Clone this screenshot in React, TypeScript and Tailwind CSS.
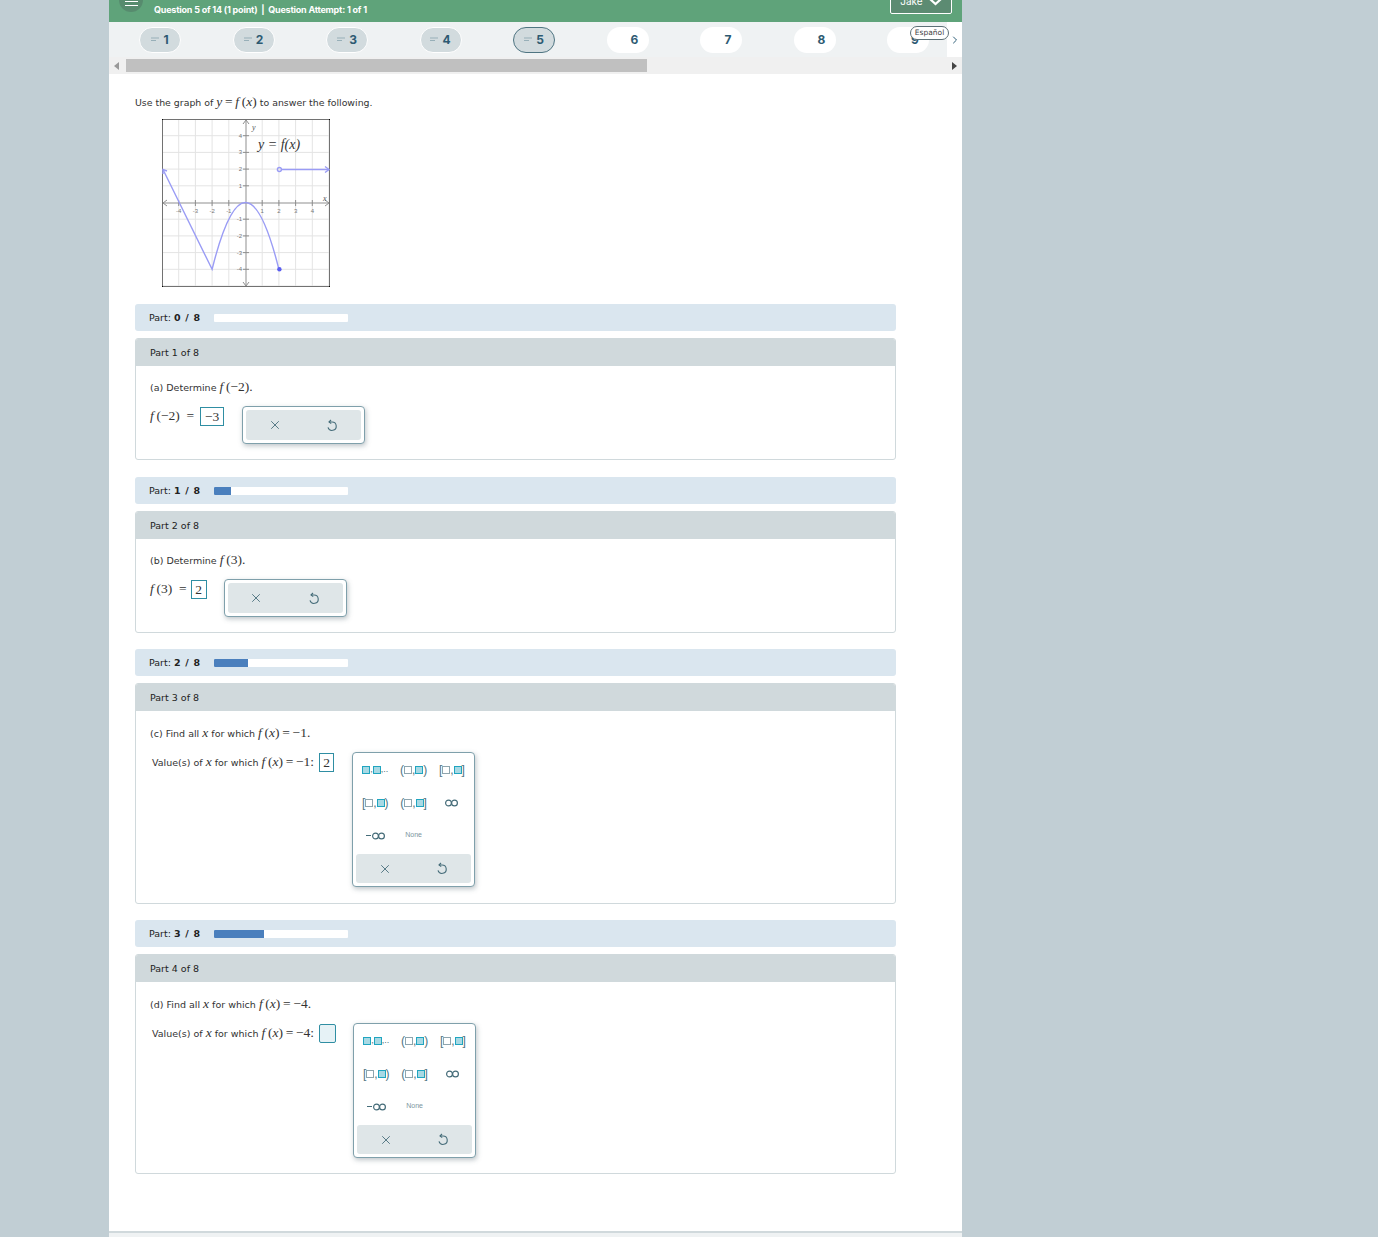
import type { ReactNode } from 'react'
import { ChevronRight, X } from 'lucide-react'

const sans = 'font-["DejaVu_Sans",sans-serif]'

function M({ children }: { children: ReactNode }) {
  return <span className='font-["Liberation_Serif",serif] text-[13.5px] text-[#333]'>{children}</span>
}

function I({ children }: { children: ReactNode }) {
  return <i className='font-["Liberation_Serif",serif]'>{children}</i>
}

function UndoIcon() {
  return (
    <svg width="12" height="13" viewBox="0 0 12 13" fill="none" stroke="#456c79" strokeWidth="1.1">
      <path d="M5 1 L3 3 L5.2 4.6" />
      <path d="M3 3 H6 A4.2 4.2 0 1 1 2 8.4" />
    </svg>
  )
}

function ActionBar({ className }: { className: string }) {
  return (
    <div className={`flex items-center rounded-[3px] bg-[#dfe6e8] ${className}`}>
      <div className="flex flex-1 justify-center">
        <X size={14} strokeWidth={1.5} color="#456c79" />
      </div>
      <div className="flex flex-1 justify-center">
        <UndoIcon />
      </div>
    </div>
  )
}

function SmallPopup({ ml }: { ml: string }) {
  return (
    <div className={`rounded-[4px] border border-[#7fa0ab] bg-white p-[3px] shadow-[1px_2px_5px_rgba(70,90,100,0.35)] ${ml}`}>
      <ActionBar className="h-[30px] w-[115px]" />
    </div>
  )
}

function Empty() {
  return <span className="inline-block h-[8px] w-[8px] border border-[#8ea5ae] bg-white" />
}

function Filled() {
  return <span className="inline-block h-[8px] w-[8px] border border-[#20a5c0] bg-[#a8d9e4]" />
}

function Interval({ open, close }: { open: string; close: string }) {
  return (
    <span className='flex items-center font-["Liberation_Sans",sans-serif] text-[12px] leading-none text-[#4f7582]'>
      {open}
      <Empty />,
      <Filled />
      {close}
    </span>
  )
}

function InfinityIcon() {
  return (
    <svg width="13" height="8" viewBox="0 0 13 8" fill="none" stroke="#456c79" strokeWidth="1.2">
      <circle cx="3.5" cy="4" r="2.9" />
      <circle cx="9.5" cy="4" r="2.9" />
    </svg>
  )
}

function BigPopup() {
  const cell = 'flex h-[33px] items-center justify-center'
  return (
    <div className="w-[123px] rounded-[4px] border border-[#7fa0ab] bg-white px-[3px] pb-[3px] shadow-[1px_2px_5px_rgba(70,90,100,0.35)]">
      <div className="grid grid-cols-3">
        <div className={cell}>
          <span className='flex items-center font-["Liberation_Sans",sans-serif] text-[9px] leading-none text-[#4f7582]'>
            <Filled />,
            <Filled />,..
          </span>
        </div>
        <div className={cell}><Interval open="(" close=")" /></div>
        <div className={cell}><Interval open="[" close="]" /></div>
        <div className={cell}><Interval open="[" close=")" /></div>
        <div className={cell}><Interval open="(" close="]" /></div>
        <div className={cell}><InfinityIcon /></div>
        <div className={`${cell} gap-[1px]`}>
          <span className="h-[1.5px] w-[5px] bg-[#456c79]" />
          <InfinityIcon />
        </div>
        <div className={cell}>
          <span className='font-["Liberation_Sans",sans-serif] text-[7px] text-[#7c959e]'>None</span>
        </div>
      </div>
      <ActionBar className="mt-[2px] h-[29px] w-[115px]" />
    </div>
  )
}

function Answer({ children, className }: { children?: ReactNode; className: string }) {
  return (
    <div className={`flex items-center justify-center border border-[#2f8ea3] font-["Liberation_Serif",serif] text-[13.5px] leading-none text-[#333] ${className}`}>
      {children}
    </div>
  )
}

function PartBar({ done, fill }: { done: number; fill: string }) {
  return (
    <div className="flex h-[27px] items-center rounded-[3px] bg-[#dae6ef] pl-[14px]">
      <span className={`${sans} w-[65px] pt-[1px] text-[9.5px] text-[#222]`}>
        Part: <b className="tracking-[0.7px]">{done} / 8</b>
      </span>
      <div className="h-[8px] w-[134px] overflow-hidden rounded-[1px] bg-white">
        <div className={`h-full bg-[#4a7fbd] ${fill}`} />
      </div>
    </div>
  )
}

function PartCard({ n, height, children }: { n: number; height: string; children: ReactNode }) {
  return (
    <div className={`mt-[7px] overflow-hidden rounded-[3px] border border-[#d0d9dc] bg-white ${height}`}>
      <div className={`${sans} flex h-[27px] items-center bg-[#d0d9dc] pl-[14px] pt-[1px] text-[9.5px] text-[#222]`}>
        Part {n} of 8
      </div>
      <div className={`${sans} pl-[14px] text-[9.5px] text-[#333]`}>{children}</div>
    </div>
  )
}

function Graph() {
  const u = 16.7
  const p = (n: number) => 83.5 + n * u
  const ticks = [-5, -4, -3, -2, -1, 1, 2, 3, 4, 5]
  const labels = [-4, -3, -2, -1, 1, 2, 3, 4]
  return (
    <svg width="168" height="168" viewBox="0 0 168 168" className="ml-[27px] mt-[9px] block">
      <rect x="0.5" y="0.5" width="167" height="167" fill="#fff" stroke="#000" />
      {ticks.map((t) => (
        <g key={t} stroke="#e4e4e4">
          <line x1={p(t)} x2={p(t)} y1="1" y2="167" />
          <line y1={p(t)} y2={p(t)} x1="1" x2="167" />
        </g>
      ))}
      <g stroke="#8f8f8f" fill="none">
        <line x1="1" x2="167" y1="84" y2="84" />
        <line x1="84" x2="84" y1="1" y2="167" />
        <path d="M5 81 L1 84 L5 87 M163 81 L167 84 L163 87 M81 5 L84 1 L87 5 M81 163 L84 167 L87 163" />
        {labels.map((t) => (
          <g key={t}>
            <line x1={p(t)} x2={p(t)} y1="81" y2="87" />
            <line y1={p(t)} y2={p(t)} x1="81" x2="87" />
          </g>
        ))}
      </g>
      <g fontFamily="Liberation Sans, sans-serif" fontSize="6" fill="#777">
        {labels.map((t) => (
          <g key={t}>
            <text x={p(t)} y="94" textAnchor="middle">{t}</text>
            <text x="80" y={p(-t) + 2} textAnchor="end">{t}</text>
          </g>
        ))}
      </g>
      <g fontFamily="Liberation Serif, serif" fontStyle="italic" fill="#555">
        <text x="90" y="11" fontSize="8">y</text>
        <text x="161" y="82" fontSize="8">x</text>
        <text x="96" y="30" fontSize="14" fill="#333">y = f(x)</text>
      </g>
      <g stroke="#9a9cf5" fill="none" strokeWidth="1.4">
        <path d={`M1 50.5 L${p(-2)} ${p(4)} Q${p(-1)} 83.5 83.5 83.5 Q${p(1)} 83.5 ${p(2)} ${p(4)}`} />
        <line x1="119" x2="167" y1="50.5" y2="50.5" />
        <path d="M163 47.5 L167 50.5 L163 53.5 M1 55 L1 50.5 L5 52" />
        <circle cx="117.4" cy="50.5" r="2" />
      </g>
      <circle cx="117.4" cy="150.3" r="2.2" fill="#5b5ef0" />
    </svg>
  )
}

const tabs = [1, 2, 3, 4, 5, 6, 7, 8, 9]

function TabPill({ n }: { n: number }) {
  const answered = n <= 5
  const current = n === 5
  return (
    <div className="flex w-[93.5px] justify-center">
      <div
        className={`flex h-[26px] w-[42px] items-center justify-center gap-[4px] rounded-full font-["Inter",sans-serif] text-[12px] font-bold text-[#2d5a72] ${
          current
            ? 'border border-[#4f7582] bg-[#d2dbde]'
            : answered
              ? 'border border-white bg-[#d2dbde]'
              : 'bg-white pl-[14px]'
        }`}
      >
        {answered && (
          <svg width="8" height="5" viewBox="0 0 8 5" stroke="#97afb8" strokeWidth="1">
            <line x1="0" x2="8" y1="1" y2="1" />
            <line x1="0" x2="5" y1="3.5" y2="3.5" />
          </svg>
        )}
        {n}
      </div>
    </div>
  )
}

export default function App() {
  return (
    <div className="h-[1237px] overflow-hidden bg-[#c1ced4] pl-[109px]">
      <div className="h-full w-[853px] bg-white">
        {/* Header */}
        <div className="relative flex h-[22px] justify-between overflow-hidden bg-[#5fa37a] pl-[45px] pr-[10px]">
          <div className="absolute left-[10px] top-[-12px] flex h-[24px] w-[24px] flex-col items-center justify-end gap-[3px] rounded-full bg-[#578b6e] pb-[6px]">
            <div className="h-px w-[13px] bg-white" />
            <div className="h-px w-[13px] bg-white" />
          </div>
          <span className='mt-[3px] font-["Inter",sans-serif] text-[9px] font-bold tracking-[-0.2px] text-white'>
            Question 5 of 14 (1 point) &nbsp;|&nbsp; Question Attempt: 1 of 1
          </span>
          <div className='-mt-[10px] flex h-[24px] w-[62px] items-end justify-center gap-[6px] rounded-[2px] border border-white bg-[#5c8b72] pb-[4px] font-["Inter",sans-serif] text-[10px] text-white'>
            Jake
            <svg width="13" height="8" viewBox="0 0 13 8" fill="none" stroke="#fff" strokeWidth="2.2" className="mb-[3px]">
              <path d="M1 1 L6.5 6 L12 1" />
            </svg>
          </div>
        </div>

        {/* Question tabs */}
        <div className="relative flex h-[35px] items-center bg-[#eff2f3] pl-[4.25px]">
          {tabs.map((n) => (
            <TabPill key={n} n={n} />
          ))}
          <div className="absolute right-0 top-0 flex h-full w-[15px] items-center justify-center bg-white">
            <ChevronRight size={12} strokeWidth={2} color="#2f5f78" />
          </div>
          <div className={`${sans} absolute left-[801px] top-[4px] flex h-[14px] w-[39px] items-center justify-center rounded-full border border-[#5c6f76] bg-white text-[7.5px] text-[#444]`}>
            Español
          </div>
        </div>
        <div className="flex h-[17px] items-center bg-[#f0f0f0]">
          <div className="ml-[5px] h-0 w-0 border-y-[4px] border-r-[5px] border-y-transparent border-r-[#999]" />
          <div className="ml-[7px] h-[13px] w-[521px] bg-[#c0c0c0]" />
          <div className="ml-[305px] h-0 w-0 border-y-[4px] border-l-[5px] border-y-transparent border-l-[#444]" />
        </div>

        {/* Question body */}
        <div className="pl-[26px] pr-[66px]">
          <p className={`${sans} mt-[19px] h-[17px] text-[9.4px] leading-[18px] text-[#333]`}>
            Use the graph of <M><I>y</I>{'\u2009'}={'\u2009'}<I>f</I>{'\u2009'}(<I>x</I>)</M> to answer the following.
          </p>
          <Graph />

          <div className="mt-[17px]"><PartBar done={0} fill="w-0" /></div>
          <PartCard n={1} height="h-[122px]">
            <p className="mt-[12px] h-[18px] leading-[18px]">(a) Determine <M><I>f</I>{'\u2009'}(−2).</M></p>
            <div className="mt-[10px] flex items-start">
              <M><I>f</I>{'\u2009'}(−2) &nbsp;=</M>
              <Answer className="ml-[6px] mt-[1px] h-[19px] w-[24px]">−3</Answer>
              <SmallPopup ml="ml-[18px]" />
            </div>
          </PartCard>

          <div className="mt-[17px]"><PartBar done={1} fill="w-[17px]" /></div>
          <PartCard n={2} height="h-[122px]">
            <p className="mt-[12px] h-[18px] leading-[18px]">(b) Determine <M><I>f</I>{'\u2009'}(3).</M></p>
            <div className="mt-[10px] flex items-start">
              <M><I>f</I>{'\u2009'}(3) &nbsp;=</M>
              <Answer className="ml-[4px] mt-[1px] h-[19px] w-[16px]">2</Answer>
              <SmallPopup ml="ml-[17px]" />
            </div>
          </PartCard>

          <div className="mt-[16px]"><PartBar done={2} fill="w-[34px]" /></div>
          <PartCard n={3} height="h-[221px]">
            <p className="mt-[13px] h-[18px] leading-[18px]">(c) Find all <M><I>x</I></M> for which <M><I>f</I>{'\u2009'}(<I>x</I>){'\u2009'}={'\u2009'}−1.</M></p>
            <div className="mt-[10px] flex items-start pl-[2px]">
              <span>Value(s) of <M><I>x</I></M> for which <M><I>f</I>{'\u2009'}(<I>x</I>){'\u2009'}={'\u2009'}−1:</M></span>
              <Answer className="ml-[5px] mt-[1px] h-[19px] w-[15px]">2</Answer>
              <div className="ml-[18px]"><BigPopup /></div>
            </div>
          </PartCard>

          <div className="mt-[16px]"><PartBar done={3} fill="w-[50px]" /></div>
          <PartCard n={4} height="h-[220px]">
            <p className="mt-[13px] h-[18px] leading-[18px]">(d) Find all <M><I>x</I></M> for which <M><I>f</I>{'\u2009'}(<I>x</I>){'\u2009'}={'\u2009'}−4.</M></p>
            <div className="mt-[10px] flex items-start pl-[2px]">
              <span>Value(s) of <M><I>x</I></M> for which <M><I>f</I>{'\u2009'}(<I>x</I>){'\u2009'}={'\u2009'}−4:</M></span>
              <Answer className="ml-[5px] mt-[1px] h-[19px] w-[17px] rounded-[2px] bg-[#e6f2f6]" />
              <div className="ml-[17px]"><BigPopup /></div>
            </div>
          </PartCard>

          <div className="-ml-[26px] -mr-[66px] mt-[57px] h-[2px] bg-[#d0d9dc]" />
          <div className="-ml-[26px] -mr-[66px] h-[10px] bg-[#eff2f3]" />
        </div>
      </div>
    </div>
  )
}
